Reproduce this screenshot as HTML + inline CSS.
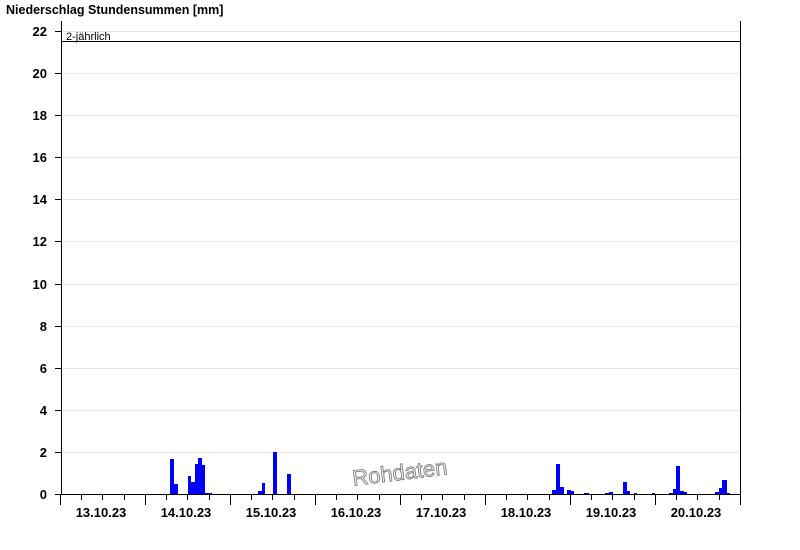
<!DOCTYPE html>
<html><head><meta charset="utf-8"><style>
html,body{margin:0;padding:0;background:#fff;width:800px;height:550px;overflow:hidden}
svg{display:block}
text{font-family:"Liberation Sans",Arial,sans-serif}
</style></head><body>
<svg width="800" height="550" xmlns="http://www.w3.org/2000/svg">
<text x="6" y="14" font-size="12.5" font-weight="bold" fill="#000">Niederschlag Stundensummen [mm]</text>
<g stroke="#e8e8e8" stroke-width="1">
<line x1="61" x2="740" y1="31.5" y2="31.5"/>
<line x1="61" x2="740" y1="73.5" y2="73.5"/>
<line x1="61" x2="740" y1="115.5" y2="115.5"/>
<line x1="61" x2="740" y1="157.5" y2="157.5"/>
<line x1="61" x2="740" y1="199.5" y2="199.5"/>
<line x1="61" x2="740" y1="241.5" y2="241.5"/>
<line x1="61" x2="740" y1="284.5" y2="284.5"/>
<line x1="61" x2="740" y1="326.5" y2="326.5"/>
<line x1="61" x2="740" y1="368.5" y2="368.5"/>
<line x1="61" x2="740" y1="410.5" y2="410.5"/>
<line x1="61" x2="740" y1="452.5" y2="452.5"/>
</g>
<g font-size="13" font-weight="bold" text-anchor="end" fill="#000">
<text x="47" y="36">22</text><text x="47" y="78">20</text><text x="47" y="120">18</text>
<text x="47" y="162">16</text><text x="47" y="204">14</text><text x="47" y="246">12</text>
<text x="47" y="289">10</text><text x="47" y="331">8</text><text x="47" y="373">6</text>
<text x="47" y="415">4</text><text x="47" y="457">2</text><text x="47" y="499">0</text>
</g>
<g stroke="#000" stroke-width="1">
<line x1="55" x2="61" y1="31.5" y2="31.5"/><line x1="55" x2="61" y1="73.5" y2="73.5"/>
<line x1="55" x2="61" y1="115.5" y2="115.5"/><line x1="55" x2="61" y1="157.5" y2="157.5"/>
<line x1="55" x2="61" y1="199.5" y2="199.5"/><line x1="55" x2="61" y1="241.5" y2="241.5"/>
<line x1="55" x2="61" y1="284.5" y2="284.5"/><line x1="55" x2="61" y1="326.5" y2="326.5"/>
<line x1="55" x2="61" y1="368.5" y2="368.5"/><line x1="55" x2="61" y1="410.5" y2="410.5"/>
<line x1="55" x2="61" y1="452.5" y2="452.5"/><line x1="55" x2="61" y1="494.5" y2="494.5"/>
</g>
<g fill="#0000ff">
<rect x="170" y="459" width="4" height="36"/><rect x="174" y="484" width="4" height="11"/>
<rect x="188" y="476" width="3" height="19"/><rect x="191" y="482" width="4" height="13"/>
<rect x="195" y="464" width="3" height="31"/><rect x="198" y="458" width="4" height="37"/>
<rect x="202" y="465" width="3" height="30"/><rect x="205" y="493" width="7" height="2"/>
<rect x="258" y="491" width="4" height="4"/><rect x="262" y="483" width="3" height="12"/>
<rect x="273" y="452" width="4" height="43"/><rect x="287" y="474" width="4" height="21"/>
<rect x="552" y="490" width="4" height="5"/><rect x="556" y="464" width="4" height="31"/>
<rect x="560" y="487" width="4" height="8"/><rect x="567" y="490" width="4" height="5"/>
<rect x="571" y="491" width="3" height="4"/><rect x="584" y="493" width="5" height="2"/>
<rect x="605" y="493" width="4" height="2"/><rect x="609" y="492" width="4" height="3"/>
<rect x="623" y="482" width="4" height="13"/><rect x="627" y="491" width="3" height="4"/>
<rect x="634" y="493" width="3" height="2"/><rect x="652" y="493" width="3" height="2"/>
<rect x="662" y="494" width="4" height="1"/><rect x="666" y="494" width="3" height="1"/>
<rect x="669" y="493" width="4" height="2"/><rect x="673" y="489" width="3" height="6"/>
<rect x="676" y="466" width="4" height="29"/><rect x="680" y="491" width="4" height="4"/>
<rect x="684" y="492" width="3" height="3"/><rect x="715" y="492" width="4" height="3"/>
<rect x="719" y="488" width="3" height="7"/><rect x="722" y="480" width="5" height="15"/>
<rect x="727" y="493" width="3" height="2"/>
</g>
<line x1="61" x2="740" y1="41.5" y2="41.5" stroke="#000"/>
<text x="66" y="40" font-size="11" fill="#000">2-jährlich</text>
<line x1="61.5" x2="61.5" y1="21" y2="495" stroke="#000"/>
<line x1="740.5" x2="740.5" y1="21" y2="495" stroke="#000"/>
<line x1="61" x2="741" y1="494.5" y2="494.5" stroke="#000"/>
<g stroke="#000">
<line x1="60.5" x2="60.5" y1="495" y2="505"/><line x1="145.5" x2="145.5" y1="495" y2="505"/>
<line x1="230.5" x2="230.5" y1="495" y2="505"/><line x1="315.5" x2="315.5" y1="495" y2="505"/>
<line x1="400.5" x2="400.5" y1="495" y2="505"/><line x1="485.5" x2="485.5" y1="495" y2="505"/>
<line x1="570.5" x2="570.5" y1="495" y2="505"/><line x1="655.5" x2="655.5" y1="495" y2="505"/>
<line x1="740.5" x2="740.5" y1="495" y2="505"/>
</g>
<g stroke="#000">
<line x1="81.5" x2="81.5" y1="495" y2="500"/><line x1="102.5" x2="102.5" y1="495" y2="500"/><line x1="124.5" x2="124.5" y1="495" y2="500"/>
<line x1="166.5" x2="166.5" y1="495" y2="500"/><line x1="187.5" x2="187.5" y1="495" y2="500"/><line x1="209.5" x2="209.5" y1="495" y2="500"/>
<line x1="251.5" x2="251.5" y1="495" y2="500"/><line x1="272.5" x2="272.5" y1="495" y2="500"/><line x1="294.5" x2="294.5" y1="495" y2="500"/>
<line x1="336.5" x2="336.5" y1="495" y2="500"/><line x1="357.5" x2="357.5" y1="495" y2="500"/><line x1="379.5" x2="379.5" y1="495" y2="500"/>
<line x1="421.5" x2="421.5" y1="495" y2="500"/><line x1="442.5" x2="442.5" y1="495" y2="500"/><line x1="464.5" x2="464.5" y1="495" y2="500"/>
<line x1="506.5" x2="506.5" y1="495" y2="500"/><line x1="527.5" x2="527.5" y1="495" y2="500"/><line x1="549.5" x2="549.5" y1="495" y2="500"/>
<line x1="591.5" x2="591.5" y1="495" y2="500"/><line x1="612.5" x2="612.5" y1="495" y2="500"/><line x1="634.5" x2="634.5" y1="495" y2="500"/>
<line x1="676.5" x2="676.5" y1="495" y2="500"/><line x1="697.5" x2="697.5" y1="495" y2="500"/><line x1="719.5" x2="719.5" y1="495" y2="500"/>
</g>
<g font-size="13" font-weight="bold" text-anchor="middle" fill="#000">
<text x="101" y="517">13.10.23</text><text x="186" y="517">14.10.23</text>
<text x="271" y="517">15.10.23</text><text x="356" y="517">16.10.23</text>
<text x="441" y="517">17.10.23</text><text x="526" y="517">18.10.23</text>
<text x="611" y="517">19.10.23</text><text x="696" y="517">20.10.23</text>
</g>
<text x="400" y="480" font-size="22" fill="#eee" stroke="#777" stroke-width="0.8" text-anchor="middle" transform="rotate(-7 400 474)">Rohdaten</text>
</svg>
</body></html>
